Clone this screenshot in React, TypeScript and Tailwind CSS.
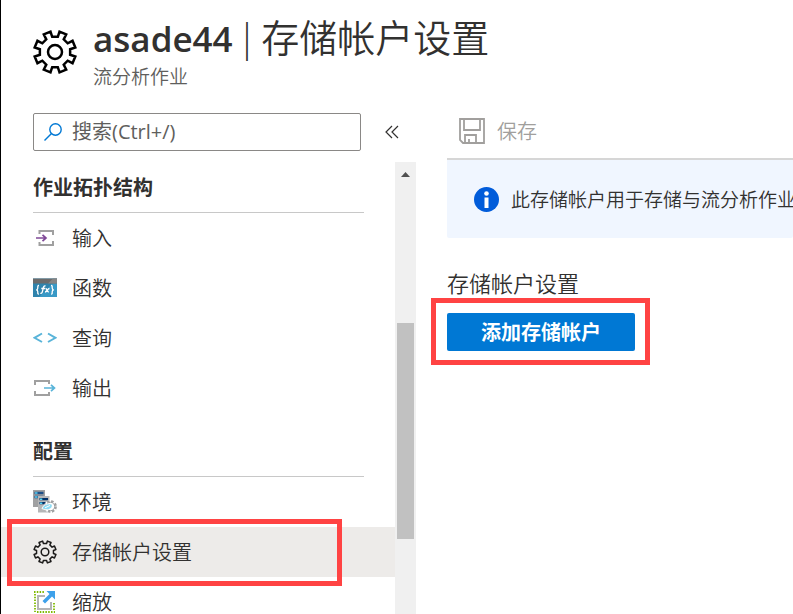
import type { ReactNode } from "react";

const gearPoints = (c: number, outer: number, inner: number) => {
  const pts: string[] = [];
  for (let i = 0; i < 8; i++) {
    const base = 22.5 + i * 45;
    for (const [r, d] of [[inner, -12], [outer, -10], [outer, 10], [inner, 12]]) {
      const a = ((base + d - 90) * Math.PI) / 180;
      pts.push(`${(c + r * Math.cos(a)).toFixed(2)},${(c + r * Math.sin(a)).toFixed(2)}`);
    }
  }
  return pts.join(" ");
};

function HeaderGear() {
  return (
    <svg className="size-11 shrink-0" viewBox="0 0 44 44" fill="none" stroke="#000" strokeWidth="2.5" aria-hidden="true">
      <polygon points={gearPoints(22, 20.8, 15.4)} />
      <circle cx="22" cy="22" r="7" />
    </svg>
  );
}

function SmallGear() {
  return (
    <svg className="size-6" viewBox="0 0 24 24" fill="none" stroke="#1b1a19" strokeWidth="1.5" strokeLinejoin="round" aria-hidden="true">
      <polygon points={gearPoints(12, 11.2, 8.6)} />
      <circle cx="12" cy="12" r="3.8" />
    </svg>
  );
}

function InputIcon() {
  return (
    <svg className="size-6" viewBox="0 0 24 24" fill="none" aria-hidden="true">
      <path d="M6.500 8V5H20V9M20 15V19H6.500V16" stroke="#a0a0a0" strokeWidth="2" />
      <path d="M3 12H12.500M9.500 8.800L13 12L9.500 15.200" stroke="#804998" strokeWidth="1.700" />
    </svg>
  );
}

function OutputIcon() {
  return (
    <svg className="size-6" viewBox="0 0 24 24" fill="none" aria-hidden="true">
      <path d="M2 9V5H16V8M16 16V19H2V15" stroke="#a0a0a0" strokeWidth="2" />
      <path d="M11 12H21M18 8.800L21.500 12L18 15.200" stroke="#59b4d9" strokeWidth="1.700" />
    </svg>
  );
}

function FunctionIcon() {
  return (
    <svg className="size-6" viewBox="0 0 24 24" aria-hidden="true">
      <path d="M0 2.500H24V21H0Z" fill="#3999c6" />
      <path d="M0 7H20L6 21H0Z" fill="#2f83ac" />
      <path d="M0 2.500H24V7.500H0Z" fill="#6b6b6b" />
      <path d="M20 2.500H24V7.500H15Z" fill="#858585" />
      <g fill="none" stroke="#fff" strokeWidth="1.300">
        <path d="M6 9.500C4.500 9.500 4.800 10.500 4.800 12C4.800 13.300 4.500 13.700 3.300 13.800C4.500 14 4.800 14.500 4.800 15.700C4.800 17.500 4.500 18.200 6 18.200" />
        <path d="M18 9.500C19.500 9.500 19.200 10.500 19.200 12C19.200 13.300 19.500 13.700 20.700 13.800C19.500 14 19.200 14.500 19.200 15.700C19.200 17.500 19.500 18.200 18 18.200" />
        <path d="M12.500 10C10.500 9.500 10.200 12 9.800 14S9 17.800 7.300 17.200M8.300 12.500H12" />
        <path d="M12.500 12.500C14.300 12.500 13.500 16 15.800 16M16.500 12.500C14.500 12.500 14 16 12 16" />
      </g>
    </svg>
  );
}

function QueryIcon() {
  return (
    <svg className="size-6" viewBox="0 0 24 24" fill="none" stroke="#59b4d9" strokeWidth="2" aria-hidden="true">
      <path d="M9 7.500L1.500 11.800L9 16M15 7.500L22.500 11.800L15 16" />
    </svg>
  );
}

function EnvironmentIcon() {
  return (
    <svg className="size-6" viewBox="0 0 24 24" aria-hidden="true">
      <path d="M0 0H12V17H0Z" fill="#a0a1a2" />
      <path d="M1.500 1.800H10.500V4.200H1.500ZM1.500 5.800H10.500V8.200H1.500Z" fill="#1e4f87" />
      <path d="M5 6H16.500V22.500H5Z" fill="#b5b6b7" />
      <path d="M6.500 8H15V10.300H6.500ZM6.500 12H13V14.300H6.500Z" fill="#003067" />
      <path d="M2 2.300H4.500V3.700H2ZM2 6.300H4.500V7.700H2ZM7 8.500H9.300V9.900H7ZM7 12.500H9.300V13.900H7Z" fill="#59d4f4" />
      <circle cx="17.500" cy="16.500" r="6.500" fill="#fff" />
      <circle cx="17.500" cy="16.500" r="5.300" fill="none" stroke="#a0a1a2" strokeWidth="2.200" strokeDasharray="2.500 1.660" />
      <circle cx="17.500" cy="16.500" r="4.200" fill="none" stroke="#a0a1a2" strokeWidth="1" />
      <path d="M8.500 19C10 14 14 13 19.500 13.700C21 18.500 16 21.500 8.500 19Z" fill="#fff" />
      <path d="M9.500 18.500C11 14.500 14 14 18.500 14.500C20 18 16 20.500 9.500 18.500Z" fill="#8fdcf4" />
      <path d="M12 17.800L17 15.500" stroke="#fff" strokeWidth="1" />
    </svg>
  );
}

function ScaleIcon() {
  return (
    <svg className="size-6" viewBox="0 0 24 24" fill="none" aria-hidden="true">
      <path d="M1 2H12M2 4V22M4 22H22M21 20V12" stroke="#7fba00" strokeWidth="1.800" strokeDasharray="1.500 1.300" />
      <path d="M12 6H5V19H18V12" stroke="#b4b5b6" strokeWidth="2" />
      <path d="M13.500 1H22V9.500L19 6.500L12 13.500L9.500 11L16.500 4Z" fill="#3ea1ea" />
    </svg>
  );
}

function SaveIcon() {
  return (
    <svg className="size-[26px]" viewBox="0 0 26 26" fill="none" stroke="#a19f9d" strokeWidth="1.800" aria-hidden="true">
      <path d="M1 1H25V25H4L1 22Z" />
      <path d="M5 1V12H21V1M6 25V17H17V25M10 25V21" />
    </svg>
  );
}

type Item = { label: string; icon: ReactNode; active?: boolean };

const sections: { title: string; items: Item[] }[] = [
  {
    title: "作业拓扑结构",
    items: [
      { label: "输入", icon: <InputIcon /> },
      { label: "函数", icon: <FunctionIcon /> },
      { label: "查询", icon: <QueryIcon /> },
      { label: "输出", icon: <OutputIcon /> },
    ],
  },
  {
    title: "配置",
    items: [
      { label: "环境", icon: <EnvironmentIcon /> },
      { label: "存储帐户设置", icon: <SmallGear />, active: true },
      { label: "缩放", icon: <ScaleIcon /> },
    ],
  },
];

function NavSection({ title, items }: { title: string; items: Item[] }) {
  return (
    <section>
      <h2 className="mr-[31px] ml-8 border-b border-[#c8c8c8] pt-0.5 text-xl leading-12 font-bold">{title}</h2>
      <ul>
        {items.map((item) => (
          <li key={item.label} className="relative">
            <a
              href="#"
              aria-current={item.active ? "page" : undefined}
              className={`flex h-[50px] items-center gap-[15px] pl-8 text-xl font-[350] ${item.active ? "bg-[#edebe9]" : ""}`}
            >
              {item.icon}
              <span className="pt-0.5">{item.label}</span>
            </a>
            {item.active && (
              <div className="pointer-events-none absolute -top-2 right-[53px] -bottom-[9px] left-1.5 z-10 border-5 border-[#ff4343]" />
            )}
          </li>
        ))}
      </ul>
    </section>
  );
}

export default function App() {
  return (
    <div className="flex h-screen flex-col overflow-hidden border-l border-black bg-white font-['Open_Sans','Noto_Sans_CJK_SC',sans-serif] text-[#323130]">
      <header className="flex h-[113px] shrink-0 items-start gap-4 pl-8">
        <div className="pt-[30px]">
          <HeaderGear />
        </div>
        <div className="pt-[13px]">
          <h1 className="flex items-baseline gap-1 text-[38px] leading-12 font-[350] whitespace-nowrap">
            <span className="text-[35px] font-semibold">asade44</span>
            <span className="font-light">|</span>
            <span>存储帐户设置</span>
          </h1>
          <p className="pt-0.5 text-[19px] leading-6 font-[350] text-[#605e5c]">流分析作业</p>
        </div>
      </header>

      <div className="flex min-h-0 flex-1">
        <aside className="flex w-[415px] shrink-0 flex-col">
          <div className="flex shrink-0 items-center gap-6 pb-[11px] pl-8">
            <label className="flex h-[38px] w-[328px] items-center gap-2.5 rounded-xs border border-[#8a8886] pl-2.5">
              <svg className="size-[18px] shrink-0" viewBox="0 0 18 18" fill="none" stroke="#0078d4" strokeWidth="1.400" aria-hidden="true">
                <circle cx="11.500" cy="6.500" r="5.700" />
                <path d="M7.500 10.500L0.500 17.500" />
              </svg>
              <input
                type="search"
                aria-label="搜索"
                placeholder="搜索(Ctrl+/)"
                className="min-w-0 flex-1 bg-transparent text-xl outline-none placeholder:text-[#605e5c]"
              />
            </label>
            <button type="button" aria-label="折叠菜单">
              <svg className="h-3.5 w-3.5" viewBox="0 0 14 14" fill="none" stroke="#323130" strokeWidth="1.200" aria-hidden="true">
                <path d="M7 1L1 7L7 13M13 1L7 7L13 13" />
              </svg>
            </button>
          </div>
          <div className="flex min-h-0 flex-1">
            <nav className="flex min-w-0 flex-1 flex-col gap-[13px]">
              {sections.map((s) => (
                <NavSection key={s.title} title={s.title} items={s.items} />
              ))}
            </nav>
            <div className="flex w-[21px] shrink-0 flex-col items-center bg-[#f0f0f0] pt-2.5">
              <svg className="h-[5px] w-[9px] shrink-0" viewBox="0 0 9 5" fill="#505050" aria-hidden="true">
                <path d="M4.500 0L9 5H0Z" />
              </svg>
              <div className="mt-[146px] h-[216px] w-[17px] shrink-0 bg-[#c1c1c1]" />
            </div>
          </div>
        </aside>

        <main className="ml-[31px] min-w-0 flex-1">
          <div className="flex h-[47px] items-start border-b-2 border-[#d6d6d6] pl-3">
            <button type="button" className="flex h-9 items-center gap-3 text-xl font-[350] text-[#a19f9d]">
              <SaveIcon />
              <span className="pt-0.5">保存</span>
            </button>
          </div>
          <div className="flex h-[78px] items-center gap-3 overflow-hidden rounded-b-xs bg-[#f0f6ff] pl-[27px]">
            <svg className="size-[25px] shrink-0" viewBox="0 0 25 25" aria-hidden="true">
              <circle cx="12.500" cy="12.500" r="12.500" fill="#015cda" />
              <circle cx="12.500" cy="6.500" r="2.300" fill="#fff" />
              <path d="M10.500 10.500H14.500V21H10.500Z" fill="#fff" />
            </svg>
            <p className="pt-0.5 text-[19px] font-[350] whitespace-nowrap">此存储帐户用于存储与流分析作业</p>
          </div>
          <h2 className="mt-[30px] text-[22px] leading-[30px] font-[350]">存储帐户设置</h2>
          <div className="relative mt-[15px] w-[188px]">
            <button type="button" className="block h-[38px] w-full rounded-xs bg-[#0078d4] pt-0.5 text-xl font-bold text-white">
              添加存储帐户
            </button>
            <div className="pointer-events-none absolute -top-[15px] -right-[15px] -bottom-3.5 -left-4 border-5 border-[#ff4343]" />
          </div>
        </main>
      </div>
    </div>
  );
}
